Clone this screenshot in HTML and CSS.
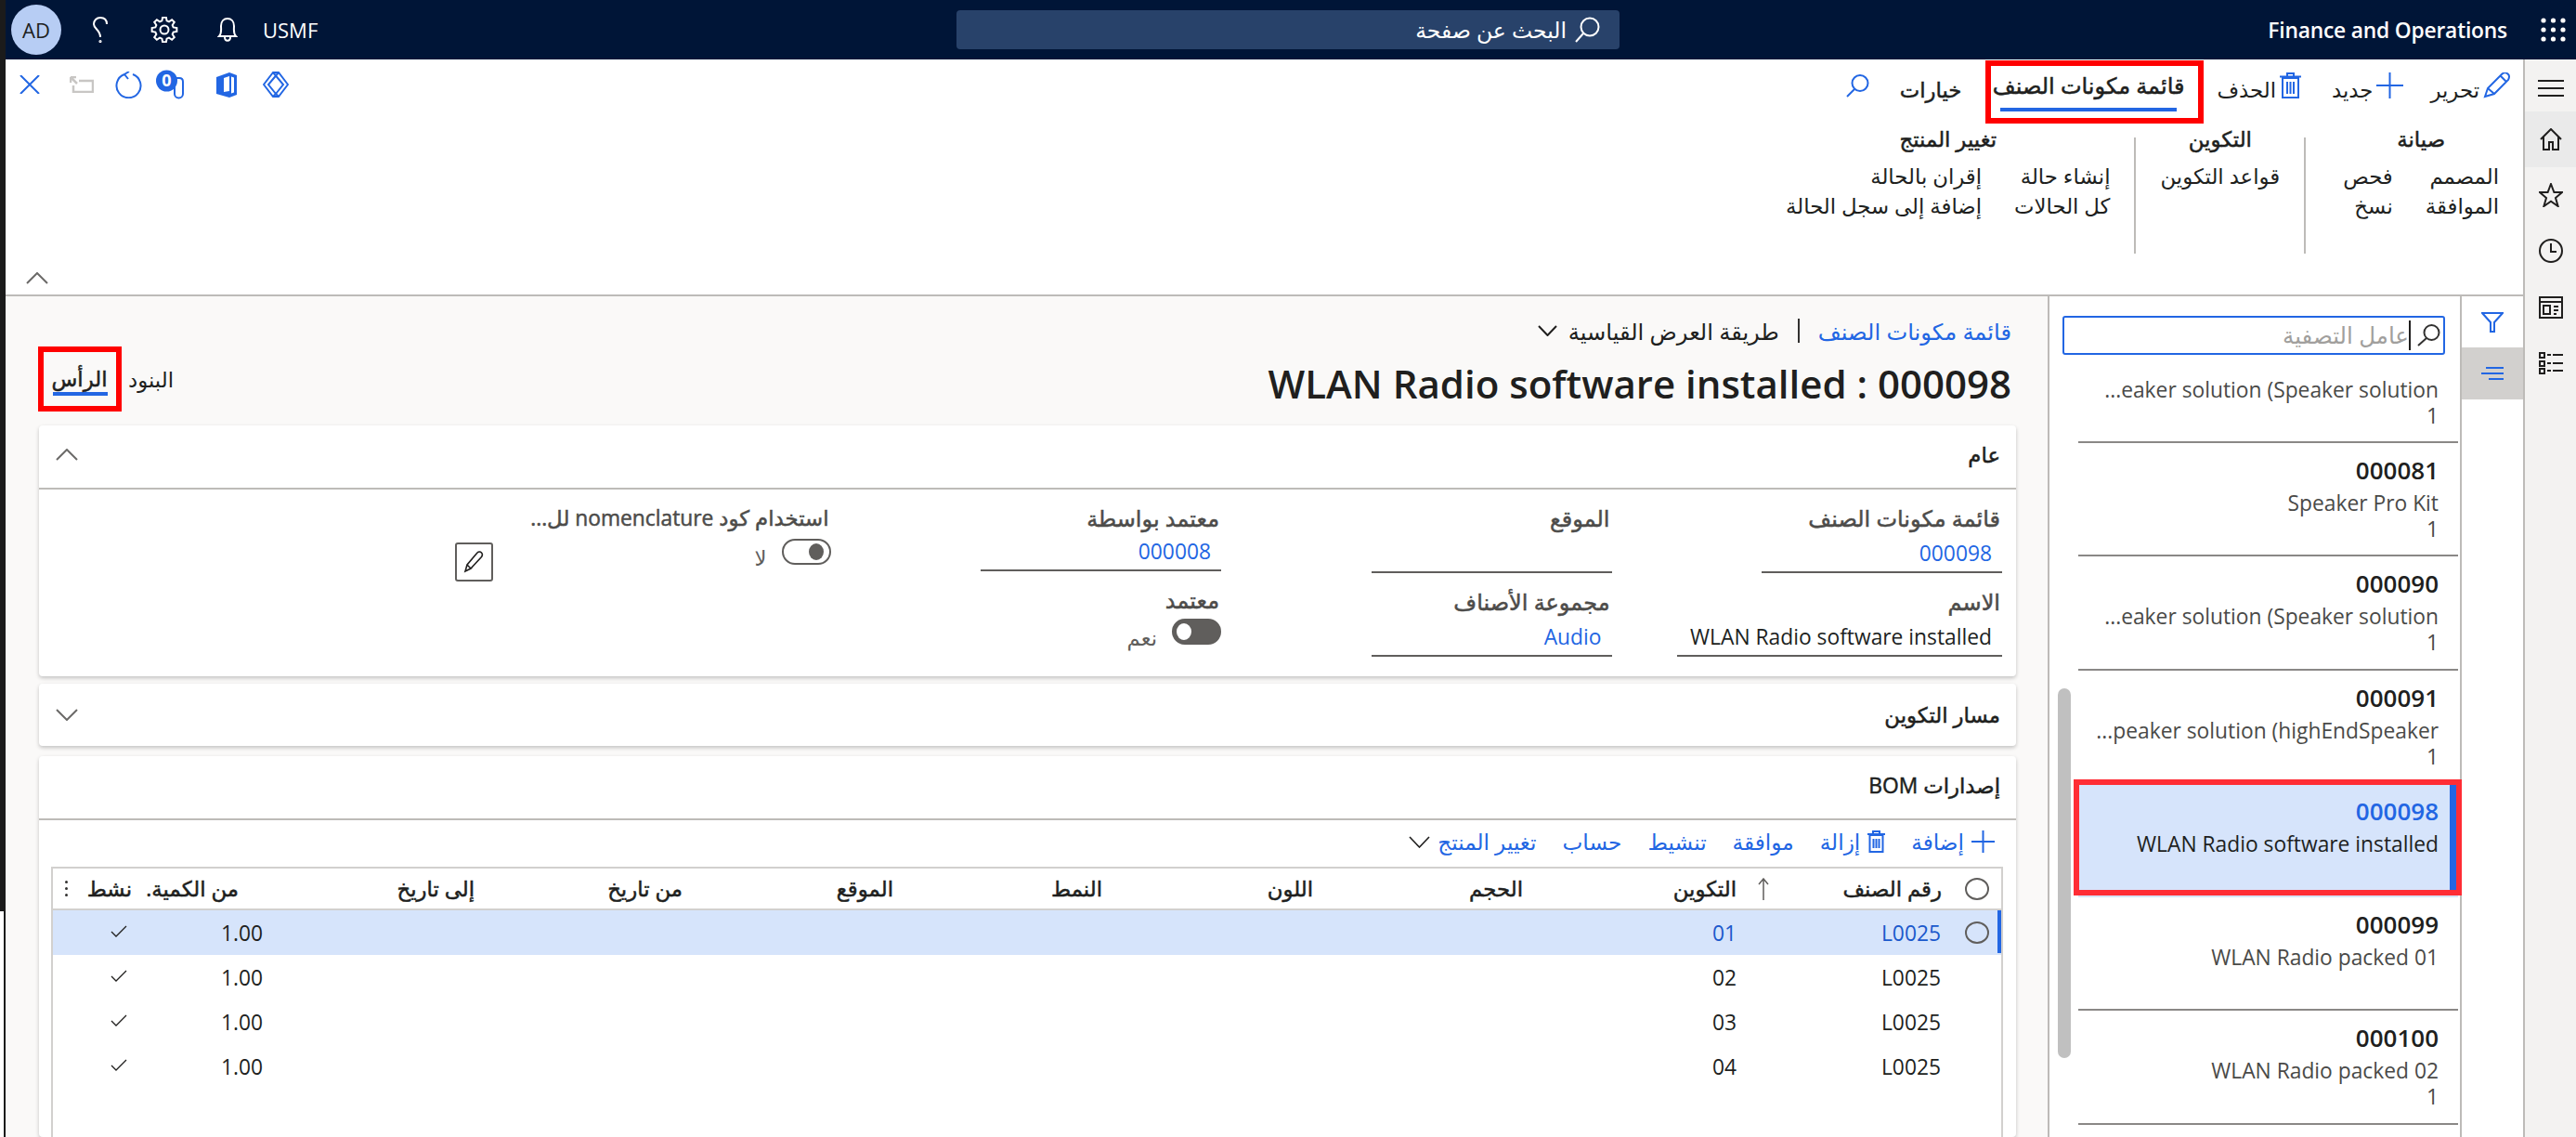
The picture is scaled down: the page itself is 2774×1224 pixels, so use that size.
FILE: index.html
```html
<!DOCTYPE html>
<html lang="ar" dir="rtl">
<head>
<meta charset="utf-8">
<title>قائمة مكونات الصنف</title>
<link rel="stylesheet" href="styles.css">
</head>
<body>
<div class="page">
  <div class="app">
    <header class="top">
      <div class="top-right">
        <svg class="waffle" width="27" height="26" viewBox="0 0 27 26"><g fill="currentColor"><circle cx="3" cy="3" r="2.6"/><circle cx="13.5" cy="3" r="2.6"/><circle cx="24" cy="3" r="2.6"/><circle cx="3" cy="13" r="2.6"/><circle cx="13.5" cy="13" r="2.6"/><circle cx="24" cy="13" r="2.6"/><circle cx="3" cy="23" r="2.6"/><circle cx="13.5" cy="23" r="2.6"/><circle cx="24" cy="23" r="2.6"/></g></svg>
        <span class="brand">Finance and Operations</span>
      </div>
      <div class="search">
        <svg class="ic" width="28" height="28" viewBox="0 0 28 28"><circle cx="17" cy="11" r="9.5"/><path d="M10 18 2 27"/></svg>
        <span>البحث عن صفحة</span>
      </div>
      <div class="top-left">
        <span class="company">USMF</span>
        <svg class="ic bell" width="22" height="26" viewBox="0 0 22 26"><path d="M2 20C5 17 4 13 4 9 4 4 7 1 11 1s7 3 7 8c0 4-1 8 2 11Z"/><path d="M8 21c0 5 6 5 6 0"/></svg>
        <svg class="ic gear" width="30" height="28" viewBox="0 0 30 28"><g transform="translate(15 14)"><path d="M-1.88-13.37 1.88-13.37 2.59-9.66 5-8.66 8.12-10.78 10.78-8.12 8.66-5 9.66-2.59 13.37-1.88 13.37 1.88 9.66 2.59 8.66 5 10.78 8.12 8.12 10.78 5 8.66 2.59 9.66 1.88 13.37-1.88 13.37-2.59 9.66-5 8.66-8.12 10.78-10.78 8.12-8.66 5-9.66 2.59-13.37 1.88-13.37-1.88-9.66-2.59-8.66-5-10.78-8.12-8.12-10.78-5-8.66-2.59-9.66Z"/><circle r="4.5"/></g></svg>
        <svg class="ic help" width="18" height="28" viewBox="0 0 18 28"><path d="M16 8C16 3 13 1 9 1 5 1 2 4 2 8c0 5 7 6 7 14"/><circle cx="9" cy="26.5" r=".6"/></svg>
        <span class="avatar">AD</span>
      </div>
    </header>
    <div class="body">
      <nav class="rail">
        <svg class="ic rail-ic rail-menu" width="28" height="18" viewBox="0 0 28 18"><path d="M0 1H28M0 9H28M0 17H28"/></svg>
        <div class="rail-home"><svg class="ic" width="24" height="24" viewBox="0 0 24 24"><path d="M1 12 12 1l11 11M4 9v14h6v-8h4v8h6V9"/></svg></div>
        <svg class="ic rail-ic rail-star" width="26" height="26" viewBox="0 0 26 26"><path d="M13 1l3.400 9H25l-7 6 2.600 9-7.600-5.300L5.400 25 8 16l-7-6h8.600Z"/></svg>
        <svg class="ic rail-ic rail-clock" width="26" height="28" viewBox="0 0 26 28"><circle cx="13" cy="14" r="12"/><path d="M13 6v9h6"/></svg>
        <svg class="ic rail-ic rail-work" width="26" height="24" viewBox="0 0 26 24"><path d="M1 1H25V23H1ZM1 6H25"/><path d="M5 10H12V19H5ZM16 11H21M16 15H21M16 19H19"/></svg>
        <svg class="ic rail-ic rail-list" width="26" height="24" viewBox="0 0 26 24"><path d="M1 1H6V6H1ZM1 10H6V15H1ZM1 18H6V23H1ZM9 3H13M15 3H26M9 12H13M15 12H26M9 20H13M15 20H26"/></svg>
      </nav>
      <div class="work">
        <section class="ribbon">
          <div class="tabs-row">
            <button class="rb rb-edit"><svg class="ic blue" width="29" height="28" viewBox="0 0 29 28"><path d="M2 26 5 17 20 2c2-2 5-2 7 0s1 4 0 6L12 23ZM5 17l7 6M19 4l6 6"/></svg><span>تحرير</span></button>
            <button class="rb rb-new"><svg class="ic blue" width="29" height="28" viewBox="0 0 29 28"><path d="M14.500 0V28M0 14H29"/></svg><span>جديد</span></button>
            <button class="rb rb-del"><svg class="ic blue" width="23" height="28" viewBox="0 0 23 28"><path d="M3 6H20V27H3ZM0 4.500H23M8 4V1H15V4M8 10V23M11.500 10V23M15 10V23"/></svg><span>الحذف</span></button>
            <div class="rb-active"><span>قائمة مكونات الصنف</span></div>
            <button class="rb rb-strong"><span>خيارات</span></button>
            <svg class="ic blue rb-search" width="26" height="25" viewBox="0 0 26 25"><circle cx="16" cy="9.500" r="8.500"/><path d="M10 16 2 24"/></svg>
            <div class="quick">
              <svg class="ic blue" width="28" height="28" viewBox="0 0 28 28"><path d="M11 1 1 14l10 13h6l10-13L17 1ZM11 1l11 13-8 10M17 1 6 14l8 10"/><path d="M11 27l3-3 3 3"/></svg>
              <svg class="office" width="22" height="27" viewBox="0 0 22 27"><path d="M0 5 14 0l8 3v21l-8 3-14-4Z" fill="#2266e3"/><path d="M8 6l6-2v16l-6 1Z M16 4.600l3 .9v16l-3 1Z" fill="#fff"/></svg>
              <svg class="attach" width="31" height="32" viewBox="0 0 31 32"><circle cx="11.500" cy="12" r="11.500" fill="#2266e3"/><text x="11.500" y="18" class="attach-n">0</text><path d="M21 9h4c3 0 4 2 4 4v13c0 6-9 6-9 0V14" fill="none" stroke="#2266e3" stroke-width="2"/></svg>
              <svg class="ic blue" width="29" height="29" viewBox="0 0 29 29"><path d="M19 3A13 13 0 1 1 10 3M10 3l5-3M10 3l4 5"/></svg>
              <svg class="ic back" width="26" height="18" viewBox="0 0 26 18"><path d="M10 5H25V17H4V10M1 1l7 7M1 1H7M1 1V7"/></svg>
              <svg class="ic blue" width="22" height="20" viewBox="0 0 22 20"><path d="M1 0l20 20M21 0 1 20"/></svg>
            </div>
          </div>
          <div class="groups">
            <div class="group group-first">
              <h3>صيانة</h3>
              <div class="cols"><ul><li>المصمم</li><li>الموافقة</li></ul><ul><li>فحص</li><li>نسخ</li></ul></div>
            </div>
            <i class="vsep"></i>
            <div class="group">
              <h3>التكوين</h3>
              <div class="cols"><ul><li>قواعد التكوين</li></ul></div>
            </div>
            <i class="vsep"></i>
            <div class="group">
              <h3>تغيير المنتج</h3>
              <div class="cols"><ul><li>إنشاء حالة</li><li>كل الحالات</li></ul><ul><li>إقران بالحالة</li><li>إضافة إلى سجل الحالة</li></ul></div>
            </div>
          </div>
          <div class="collapse"><svg class="chev" width="24" height="13" viewBox="0 0 24 13"><path d="M1 12 12 1l11 11"/></svg></div>
        </section>
        <div class="lower">
          <aside class="side-tabs">
            <div class="side-tab"><svg class="ic blue" width="24" height="22" viewBox="0 0 24 22"><path d="M1 1H23L14 11V21H10V11Z"/></svg></div>
            <div class="side-tab side-tab-on"><svg class="ic blue" width="24" height="14" viewBox="0 0 24 14"><path d="M5 1H24M0 7H24M8 13H24"/></svg></div>
          </aside>
          <aside class="list-pane">
            <div class="filter">
              <svg class="ic" width="25" height="24" viewBox="0 0 25 24"><circle cx="15.500" cy="9" r="8"/><path d="M10 15 1 23"/></svg>
              <span class="filter-text">عامل التصفية</span>
            </div>
            <div class="scroll-thumb"></div>
            <div class="item item-first">
              <div class="i-name"><span class="ltr">...eaker solution (Speaker solution</span></div>
              <div class="i-num">1</div>
            </div>
            <div class="item">
              <div class="i-title">000081</div>
              <div class="i-name">Speaker Pro Kit</div>
              <div class="i-num">1</div>
            </div>
            <div class="item">
              <div class="i-title">000090</div>
              <div class="i-name"><span class="ltr">...eaker solution (Speaker solution</span></div>
              <div class="i-num">1</div>
            </div>
            <div class="item">
              <div class="i-title">000091</div>
              <div class="i-name"><span class="ltr">...peaker solution (highEndSpeaker</span></div>
              <div class="i-num">1</div>
            </div>
            <div class="item item-on">
              <div class="i-title">000098</div>
              <div class="i-name">WLAN Radio software installed</div>
            </div>
            <div class="item">
              <div class="i-title">000099</div>
              <div class="i-name">WLAN Radio packed 01</div>
            </div>
            <div class="item">
              <div class="i-title">000100</div>
              <div class="i-name">WLAN Radio packed 02</div>
              <div class="i-num">1</div>
            </div>
          </aside>
          <main class="content">
            <div class="crumbs">
              <a class="link">قائمة مكونات الصنف</a>
              <i class="crumb-sep"></i>
              <span>طريقة العرض القياسية</span>
              <svg class="chev dark" width="21" height="12" viewBox="0 0 21 12"><path d="M1 1l9.500 10L20 1"/></svg>
            </div>
            <div class="head">
              <h1>000098 : WLAN Radio software installed</h1>
              <div class="views">
                <span class="view">البنود</span>
                <span class="view-on"><span class="view-on-text">الرأس</span></span>
              </div>
            </div>
            <section class="card">
              <div class="card-head">
                <h2>عام</h2>
                <svg class="chev" width="24" height="13" viewBox="0 0 24 13"><path d="M1 12 12 1l11 11"/></svg>
              </div>
              <div class="form">
                <div class="fcol">
                  <div class="field"><label>قائمة مكونات الصنف</label><div class="val link">000098</div></div>
                  <div class="field wide"><label>الاسم</label><div class="val">WLAN Radio software installed</div></div>
                </div>
                <div class="fcol">
                  <div class="field"><label>الموقع</label><div class="val"></div></div>
                  <div class="field"><label>مجموعة الأصناف</label><div class="val link">Audio</div></div>
                </div>
                <div class="fcol">
                  <div class="field"><label>معتمد بواسطة</label><div class="val val-short link">000008</div></div>
                  <div class="field">
                    <label>معتمد</label>
                    <div class="tg-row tg-yes"><span class="tg tg-on"></span><span class="tg-text">نعم</span></div>
                  </div>
                </div>
                <div class="fcol fcol-last">
                  <div class="field field-long">
                    <label>استخدام كود nomenclature لل...</label>
                    <div class="tg-row"><span class="tg tg-off"></span><span class="tg-text">لا</span></div>
                  </div>
                  <button class="edit"><svg width="22" height="24" viewBox="0 0 22 24" class="ic dark-ic"><path d="M2 22l2-7L15 2c1.500-1.500 3.500-1 4.500 0s1 3 0 4.500L8 19ZM4 15l4 4"/></svg></button>
                </div>
              </div>
            </section>
            <section class="card card-closed">
              <div class="card-head">
                <h2>مسار التكوين</h2>
                <svg class="chev" width="24" height="13" viewBox="0 0 24 13"><path d="M1 1l11 11L23 1"/></svg>
              </div>
            </section>
            <section class="card card-grid">
              <div class="card-head"><h2>إصدارات BOM</h2></div>
              <div class="toolbar">
                <span class="tb"><svg class="ic" width="25" height="24" viewBox="0 0 25 24"><path d="M12.500 0V24M0 12H25"/></svg><span>إضافة</span></span>
                <span class="tb"><svg class="ic" width="19" height="24" viewBox="0 0 19 24"><path d="M2.500 5H16.500V23H2.500ZM0 4H19M6 4V1H13V4M6.500 9V19M9.500 9V19M12.500 9V19"/></svg><span>إزالة</span></span>
                <span class="tb">موافقة</span>
                <span class="tb">تنشيط</span>
                <span class="tb">حساب</span>
                <span class="tb"><span>تغيير المنتج</span><svg class="ic tb-chev" width="23" height="13" viewBox="0 0 23 13"><path d="M1 1l10.500 11L22 1"/></svg></span>
              </div>
              <div class="grid">
                <div class="g-row g-head">
                  <div class="c c-sel"><span class="radio"></span></div>
                  <div class="c c-item"><span>رقم الصنف</span><svg class="ic sort" width="12" height="24" viewBox="0 0 12 24"><path d="M6 24V1M1 7 6 1l5 6"/></svg></div>
                  <div class="c">التكوين</div>
                  <div class="c">الحجم</div>
                  <div class="c">اللون</div>
                  <div class="c">النمط</div>
                  <div class="c">الموقع</div>
                  <div class="c">من تاريخ</div>
                  <div class="c">إلى تاريخ</div>
                  <div class="c c-qty">من الكمية.</div>
                  <div class="c c-act">نشط</div>
                  <div class="c c-more"><i></i><i></i><i></i></div>
                </div>
                <div class="g-row g-on">
                  <div class="c c-sel"><span class="radio"></span></div>
                  <div class="c c-link">L0025</div><div class="c c-link">01</div>
                  <div class="c"></div><div class="c"></div><div class="c"></div><div class="c"></div><div class="c"></div><div class="c"></div>
                  <div class="c c-val">1.00</div>
                  <div class="c c-chk"><svg class="ic" width="18" height="13" viewBox="0 0 18 13"><path d="M1 7l5 5L17 1"/></svg></div>
                </div>
                <div class="g-row">
                  <div class="c c-sel"></div>
                  <div class="c">L0025</div><div class="c">02</div>
                  <div class="c"></div><div class="c"></div><div class="c"></div><div class="c"></div><div class="c"></div><div class="c"></div>
                  <div class="c c-val">1.00</div>
                  <div class="c c-chk"><svg class="ic" width="18" height="13" viewBox="0 0 18 13"><path d="M1 7l5 5L17 1"/></svg></div>
                </div>
                <div class="g-row">
                  <div class="c c-sel"></div>
                  <div class="c">L0025</div><div class="c">03</div>
                  <div class="c"></div><div class="c"></div><div class="c"></div><div class="c"></div><div class="c"></div><div class="c"></div>
                  <div class="c c-val">1.00</div>
                  <div class="c c-chk"><svg class="ic" width="18" height="13" viewBox="0 0 18 13"><path d="M1 7l5 5L17 1"/></svg></div>
                </div>
                <div class="g-row">
                  <div class="c c-sel"></div>
                  <div class="c">L0025</div><div class="c">04</div>
                  <div class="c"></div><div class="c"></div><div class="c"></div><div class="c"></div><div class="c"></div><div class="c"></div>
                  <div class="c c-val">1.00</div>
                  <div class="c c-chk"><svg class="ic" width="18" height="13" viewBox="0 0 18 13"><path d="M1 7l5 5L17 1"/></svg></div>
                </div>
              </div>
            </section>
          </main>
        </div>
      </div>
    </div>
  </div>
  <div class="edge"><div class="edge-top"></div><div class="edge-bottom"></div></div>
</div>
</body>
</html>
```
FILE: styles.css
```css
* { box-sizing: border-box; }
html, body { margin: 0; padding: 0; height: 100%; }
body { font-family: "Open Sans", "DejaVu Sans", sans-serif; font-size: 22.800px; color: #201f1e; background: #fff; overflow: hidden; }
h1, h2, h3, ul { margin: 0; padding: 0; }
ul { list-style: none; }
button { font: inherit; color: inherit; background: none; border: 0; padding: 0; }
.page { display: flex; height: 1224px; overflow: hidden; }
.app { flex: 1; display: flex; flex-direction: column; min-width: 0; }
.edge { width: 6px; flex: none; display: flex; flex-direction: column; }
.edge-top { height: 981px; background: #1b1b1b; }
.edge-bottom { flex: 1; border-right: 2px solid #1b1b1b; width: 5px; }
.ic { fill: none; stroke: currentColor; stroke-width: 2; flex: none; display: block; }
.blue { color: #2266e3; }
.link { color: #2266e3; }
.chev { fill: none; stroke: #6b6a68; stroke-width: 2; flex: none; display: block; }
.chev.dark { stroke: #201f1e; }

/* semibold look for the Arabic fallback, which only has regular and bold */
.rb-active, .rb-strong, .group h3, .view-on-text, .card-head h2, .field label, .g-head { font-weight: 400; -webkit-text-stroke: .5px currentColor; }

.top { height: 64px; flex: none; background: #001537; color: #fff; display: grid; grid-template-columns: 1fr auto 1fr; align-items: center; margin-left: -6px; }
.top-right { display: flex; align-items: center; padding-right: 11px; gap: 36px; }
.brand { font-size: 22.800px; font-weight: 600; letter-spacing: -.2px; }
.search { width: 714px; height: 42px; background: #28426a; border-radius: 4px; display: flex; align-items: center; padding-right: 21px; gap: 8px; font-size: 23.500px; }
.top-left { display: flex; align-items: center; justify-content: flex-end; padding-left: 12px; }
.company { font-size: 22px; margin-left: 27px; }
.bell { margin-left: 42px; }
.gear { margin-left: 45px; }
.help { margin-left: 33px; }
.avatar { width: 54px; height: 54px; border-radius: 50%; background: #b7cdf4; color: #201f1e; font-size: 22px; display: flex; align-items: center; justify-content: center; }

.body { flex: 1; display: flex; min-height: 0; }
.rail { width: 57px; flex: none; background: #f3f2f1; border-left: 2px solid #bdbbb8; display: flex; flex-direction: column; align-items: center; padding-top: 22px; }
.rail-home { width: 55px; height: 60px; background: #eaeaea; display: flex; align-items: center; justify-content: center; margin-top: 16px; }
.rail-star { margin-top: 17px; }
.rail-clock { margin-top: 33px; }
.rail-work { margin-top: 35px; }
.rail-list { margin-top: 36px; }

.work { flex: 1; display: flex; flex-direction: column; min-width: 0; }
.ribbon { height: 255px; flex: none; border-bottom: 2px solid #bdbbb8; background: #fff; display: flex; flex-direction: column; }
.tabs-row { height: 70px; flex: none; display: flex; align-items: center; padding-right: 14px; }
.rb { display: flex; align-items: flex-start; gap: 4px; height: 40px; margin-bottom: 2px; line-height: 38px; white-space: nowrap; }
.rb-edit { margin-left: 29px; }
.rb-new { margin-left: 33px; }
.rb-del { margin-left: 14px; }
.rb-strong { margin-left: 33px; margin-right: 26px; }
.rb-active { width: 235px; height: 68px; border: 6px solid #f00; padding-right: 15px; position: relative; line-height: 42px; white-space: nowrap; font-size: 24px; }
.rb-active::after { content: ""; position: absolute; right: 23px; top: 45px; width: 190px; height: 4px; background: #2266e3; }
.rb-search { margin-bottom: 14px; }
.quick { margin-right: auto; padding-left: 15px; margin-bottom: 16px; display: flex; align-items: center; }
.quick svg { display: block; flex: none; }
.office { margin-right: 28px; }
.attach { margin-right: 34px; }
.attach-n { fill: #fff; font-size: 18px; font-weight: 700; text-anchor: middle; }
.quick .attach + svg { margin-right: 15px; }
.back { color: #c8c6c4; stroke-width: 2.500; margin-right: 23px; }
.quick .back + svg { margin-right: 32px; }
.groups { height: 151px; flex: none; display: flex; }
.group { display: flex; flex-direction: column; align-items: center; padding: 0 26px; }
.group-first { padding-left: 40px; }
.group h3 { font-size: 22.800px; line-height: 32px; height: 40px; }
.cols { display: flex; gap: 35px; }
.cols li { line-height: 32px; white-space: nowrap; }
.vsep { width: 2px; height: 125px; background: #bdbbb8; margin-top: 14px; flex: none; }
.collapse { flex: 1; display: flex; justify-content: flex-end; padding-left: 22px; padding-top: 8px; }

.lower { flex: 1; display: flex; min-height: 0; }
.side-tabs { width: 68px; flex: none; border-left: 2px solid #bdbbb8; display: flex; flex-direction: column; }
.side-tab { height: 55px; display: flex; align-items: center; justify-content: center; }
.side-tab-on { height: 56px; background: #d2d0ce; }
.list-pane { width: 444px; flex: none; border-left: 2px solid #bdbbb8; position: relative; padding-top: 21px; padding-right: 2px; }
.filter { height: 42px; margin: 0 14px; border: 2px solid #2266e3; border-radius: 3px; display: flex; align-items: center; padding-right: 3px; gap: 7px; color: #323130; }
.filter-text { color: #a19f9d; border-right: 2px solid #201f1e; line-height: 32px; height: 32px; font-size: 24.500px; white-space: nowrap; }
.scroll-thumb { position: absolute; left: 9px; top: 422px; width: 14px; height: 398px; background: #c0c0c0; border-radius: 7px; }
.item { height: 122.300px; margin-left: 31px; border-bottom: 2px solid #8a8886; padding-right: 21px; position: relative; }
.item-first { height: 95px; padding-top: 20px; }
.i-title { font-size: 26px; font-weight: 600; line-height: 34px; padding-top: 12px; height: 47px; }
.i-name { line-height: 36px; height: 32px; color: #4a4a48; white-space: nowrap; }
.i-num { line-height: 28px; color: #4a4a48; }
.ltr { direction: ltr; unicode-bidi: isolate; display: inline-block; }
.item-on { background: #d6e4fb; border-bottom-color: #d6e4fb; }
.item-on::before { content: ""; position: absolute; top: 0; bottom: 0; right: 2px; width: 7px; background: #2266e3; }
.item-on::after { content: ""; position: absolute; top: -5px; bottom: 0; left: -5px; right: -4px; border: 6px solid #ff2d35; }
.item-on .i-title { color: #2266e3; }
.item-on .i-name { color: #201f1e; }

.content { flex: 1; min-width: 0; background: #faf9f8; padding: 22px 34px 0 36px; display: flex; flex-direction: column; }
.crumbs { display: flex; align-items: center; height: 30px; padding-right: 5px; gap: 20px; white-space: nowrap; font-size: 24.200px; }
.crumb-sep { width: 2px; height: 26px; background: #323130; }
.crumbs .chev { margin-right: -8px; }
.head { height: 70px; margin-top: 2px; display: flex; align-items: center; justify-content: space-between; padding-right: 5px; }
.head h1 { font-size: 42px; font-weight: 600; white-space: nowrap; padding-top: 8px; }
.views { display: flex; align-items: center; }
.view { margin-left: 7px; }
.view-on { width: 90px; height: 70px; border: 6px solid #f00; display: flex; justify-content: center; margin-left: -1px; }
.view-on-text { display: block; height: 47px; padding-top: 10px; line-height: 38px; border-bottom: 4px solid #2266e3; width: 59px; text-align: center; }

.card { background: #fff; border-radius: 4px; box-shadow: 0 2px 4px rgba(0,0,0,.22); flex: none; }
.card:first-of-type { margin-top: 15px; }
.card-head { height: 69px; border-bottom: 2px solid #bdbbb8; display: flex; align-items: center; justify-content: space-between; padding: 0 17px 4px 18px; }
.card-head h2 { font-size: 22.800px; }
.form { height: 201px; display: flex; padding: 15px 15px 0 0; }
.fcol { width: 420.500px; display: flex; flex-direction: column; gap: 15px; flex: none; }
.fcol-last { flex-direction: row; gap: 24px; width: auto; }
.field { width: 259px; }
.wide { width: 350px; }
.field-long { width: 340px; }
.field label { display: block; height: 32px; line-height: 32px; padding-right: 2px; color: #4d4c4a; white-space: nowrap; font-size: 24px; }
.field-long label { font-size: 22.800px; }
.val { height: 43px; border-bottom: 2px solid #605e5c; padding: 5px 11px 0 0; line-height: 34px; white-space: nowrap; }
.val-short { height: 41px; padding-top: 3px; }
.tg-row { display: flex; gap: 16px; align-items: flex-end; margin-top: 4px; height: 30px; }
.tg-yes { margin-top: 2px; }
.tg { width: 53px; height: 28px; border-radius: 14px; position: relative; flex: none; border: 2px solid #605e5c; }
.tg::after { content: ""; position: absolute; width: 16px; height: 18px; border-radius: 50%; top: 3px; }
.tg-on { background: #605e5c; }
.tg-on::after { background: #fff; left: 3px; }
.tg-off::after { background: #605e5c; right: 6px; }
.tg-text { line-height: 24px; color: #605e5c; margin-bottom: -5px; }
.edit { width: 41px; height: 42px; border: 2px solid #605e5c; border-radius: 3px; margin-top: 42px; display: flex; align-items: center; justify-content: center; }
.dark-ic { color: #201f1e; stroke-width: 1.600; }

.card-closed { height: 67px; margin-top: 8px; }
.card-closed .card-head { height: 67px; border-bottom: 0; padding-bottom: 0; }
.card-grid { margin-top: 11px; flex: 1; min-height: 0; }
.toolbar { height: 50px; display: flex; align-items: center; color: #2266e3; padding: 0 23px 4px 0; gap: 28px; font-size: 23.200px; }
.tb { display: flex; align-items: center; gap: 8px; white-space: nowrap; }
.tb-chev { stroke-width: 1.600; color: #201f1e; }
.grid { margin: 0 14px 0 13px; border: 2px solid #d2d0ce; border-bottom: 0; height: 400px; }
.g-row { display: grid; grid-template-columns: 55px 220px 230px 226px 227px 225px 227px 224px 231px 140px 65px 28px; height: 48px; align-items: center; }
.g-head { height: 45px; border-bottom: 2px solid #d2d0ce; }
.g-on { background: #d6e4fb; position: relative; }
.g-on::before { content: ""; position: absolute; right: 0; top: 0; height: 46px; width: 4px; background: #2266e3; }
.c { padding-right: 10px; white-space: nowrap; }
.c-sel { padding-right: 13px; display: flex; }
.radio { width: 26px; height: 24px; border: 2px solid #605e5c; border-radius: 50%; display: block; }
.c-item { padding-right: 9px; display: flex; justify-content: space-between; align-items: center; padding-left: 13px; }
.sort { color: #605e5c; stroke-width: 1.500; }
.c-qty { padding-right: 33px; }
.c-val { padding-right: 7px; }
.c-act { padding-right: 8px; }
.c-chk { padding-right: 13px; }
.c-chk .ic { stroke-width: 1.300; margin-bottom: 4px; }
.c-link { color: #1b59cc; }
.c-more { display: flex; flex-direction: column; align-items: center; gap: 4px; padding: 0; }
.c-more i { width: 3px; height: 3px; background: #323130; border-radius: 50%; display: block; }
```
